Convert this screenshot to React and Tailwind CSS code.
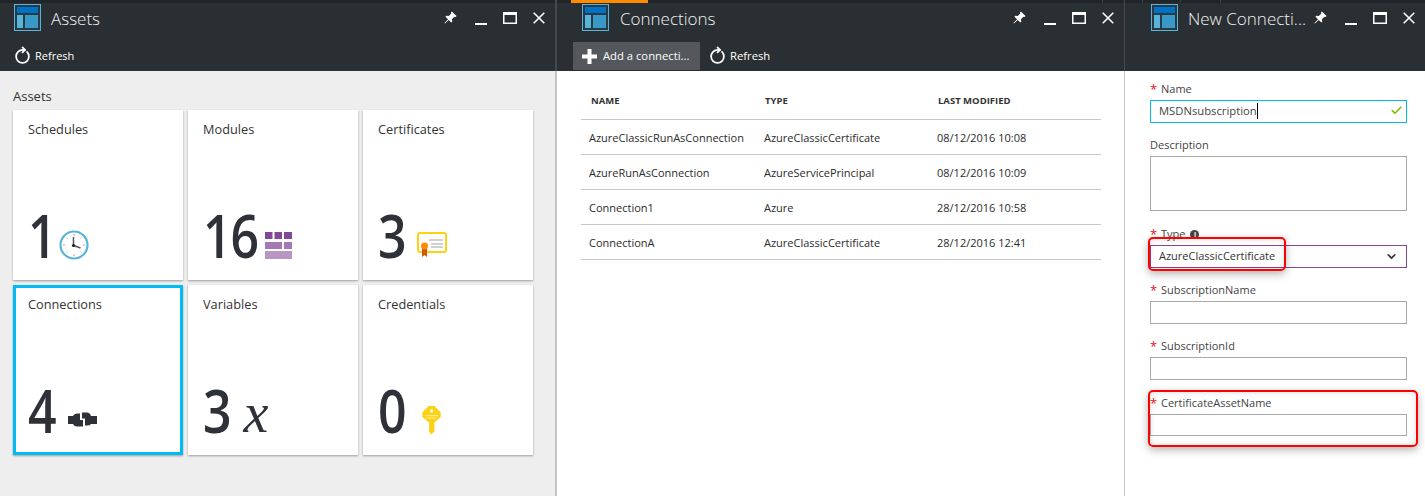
import React from 'react';
import { RotateCw, Check, ChevronDown } from 'lucide-react';

const font = "font-['Open_Sans','Noto_Sans',sans-serif]";

const BladeIcon = () => (
  <svg width="27" height="27" viewBox="0 0 27 27" className="shrink-0">
    <rect x="0.5" y="0.5" width="26" height="26" fill="#2a3a45" stroke="#59b4d9" />
    <rect x="3" y="3" width="21" height="6" fill="#0072c6" />
    <rect x="3" y="11" width="6" height="13" fill="#59b4d9" />
    <rect x="11" y="11" width="13" height="13" fill="#3999c6" />
  </svg>
);

const WindowControls = () => (
  <div className="flex items-center gap-[17px] text-white">
    <svg width="13" height="13" viewBox="0 0 14 14" fill="white" className="mr-px">
      <path d="M8.500 0.500l5 5-1 1-1.200-.4-2.800 2.800.4 2.600-1 1-2.900-2.900L1 13.500l-.5-.5 3.900-4L1.500 6.100l1-1 2.600.4 2.800-2.800-.4-1.200z" />
    </svg>
    <svg width="12" height="12" viewBox="0 0 12 12" className="mt-[2px]">
      <rect x="0" y="10" width="12" height="2" fill="white" />
    </svg>
    <svg width="14" height="12" viewBox="0 0 14 12" fill="none" className="-ml-px">
      <rect x="0.750" y="1" width="12.500" height="10.250" stroke="white" strokeWidth="1.500" />
      <rect x="0" y="0" width="14" height="3" fill="white" />
    </svg>
    <svg width="12" height="12" viewBox="0 0 12 12" className="-ml-px">
      <path d="M0.700 0.700L11.300 11.300M11.300 0.700L0.700 11.300" stroke="white" strokeWidth="1.600" />
    </svg>
  </div>
);

const BladeHeader = ({ title, titleClass = 'ml-[10px]' }) => (
  <div className="flex items-center h-[27px]">
    <BladeIcon />
    <div className={`${titleClass} mt-[2px] text-[17px] font-light text-[#f2f2f2] whitespace-nowrap`}>{title}</div>
    <div className="flex-1" />
    <WindowControls />
  </div>
);

const Clock = () => (
  <svg width="30" height="30" viewBox="0 0 30 30">
    <circle cx="15" cy="15" r="13.500" fill="white" stroke="#59b4d9" strokeWidth="2.200" />
    <path d="M15 4v2M15 24v2M4 15h2M24 15h2M7.500 7.500l1 1M21.500 21.500l1 1M7.500 22.500l1-1M21.500 8.500l1-1" stroke="#a0a1a2" strokeWidth="0.900" />
    <path d="M14.500 7v8.500l7 2.500" fill="none" stroke="#555" strokeWidth="1.500" />
    <circle cx="14.500" cy="15.500" r="1.600" fill="#222" />
  </svg>
);

const Modules = () => (
  <svg width="27" height="27" viewBox="0 0 27 27">
    <rect x="0" y="0" width="7.500" height="7" fill="#804998" />
    <rect x="9.500" y="0" width="7.500" height="7" fill="#804998" />
    <rect x="19" y="0" width="8" height="7" fill="#804998" />
    <rect x="0" y="10" width="17" height="7" fill="#a379b5" />
    <rect x="19" y="10" width="8" height="7" fill="#a379b5" />
    <rect x="0" y="19" width="27" height="8" fill="#b796c4" />
  </svg>
);

const Cert = () => (
  <svg width="30" height="26" viewBox="0 0 30 26">
    <rect x="1" y="1" width="28" height="19" rx="2" fill="white" stroke="#fcd116" strokeWidth="2" />
    <path d="M12 8h14M14 12h12M14 15h12" stroke="#a0a1a2" strokeWidth="1" />
    <path d="M5 15v10l2.500-2 2.500 2V15z" fill="#d15900" />
    <circle cx="7.500" cy="14" r="3.500" fill="#ff8c00" />
  </svg>
);

const Plug = () => (
  <svg width="29" height="16" viewBox="0 0 29 16" fill="#2e3238">
    <path d="M0 4H5Q6 1.500 9 1.500H12V8H15V14.500H9Q6 14.500 5 12H0Z" />
    <path d="M14 0.500H19Q22 0.500 23 4H29V12H23Q22 13.500 19 13.500H17V6.500H14Z" />
  </svg>
);

const Key = () => (
  <svg width="19" height="29" viewBox="0 0 19 30">
    <path d="M6.500 0h6L19 6.500v5L12.500 17v9l-3 3.500-2.500-2.500V17L0 11.500v-5z" fill="#fcd116" />
    <circle cx="9.500" cy="5" r="1.700" fill="white" />
    <path d="M3 10h13M4 12.500h11" stroke="#fff1a8" strokeWidth="1" />
  </svg>
);

const Tile = ({ label, value, icon, selected, iconClass }) => (
  <div className={`h-[170px] bg-white shadow-[0_1px_2px_rgba(0,0,0,0.35)] flex flex-col justify-between ${selected ? 'border-[3px] border-[#00bcf2] pl-3 pt-[7px] pb-[12px]' : 'pl-[15px] pt-[10px] pb-[15px]'}`}>
    <div className="text-[12.75px] text-[#333]">{label}</div>
    <div className="flex items-end">
      <span className="inline-block text-[50px] leading-none font-semibold tracking-[-1px] text-[#2e3238] origin-bottom scale-y-[1.2]">{value}</span>
      <span className={iconClass}>{icon}</span>
    </div>
  </div>
);

const rows = [
  ['AzureClassicRunAsConnection', 'AzureClassicCertificate', '08/12/2016 10:08'],
  ['AzureRunAsConnection', 'AzureServicePrincipal', '08/12/2016 10:09'],
  ['Connection1', 'Azure', '28/12/2016 10:58'],
  ['ConnectionA', 'AzureClassicCertificate', '28/12/2016 12:41'],
];

const Field = ({ label, required = true, children, info, className }) => (
  <div className={className}>
    <div className="relative h-[16px] flex items-center text-[11px] leading-[16px] text-[#444]">
      {required && <span className="absolute left-0 top-0 text-[#e81123] text-[13px]">*</span>}
      <span className={required ? 'ml-[11px]' : ''}>{label}</span>
      {info && <span className="ml-[5px] w-[9px] h-[9px] rounded-full bg-[#444] text-white text-[7px] leading-[9px] font-bold text-center">i</span>}
    </div>
    {children}
  </div>
);

const Box = ({ h = 'h-[23px]' }) => <div className={`mt-[3px] ${h} w-full bg-white border border-[#a9a9a9]`} />;

const Separator = () => (
  <div className="w-[2px] h-full bg-[#c4c4c4] flex flex-col">
    <div className="h-[71px] bg-[#44494d]" />
  </div>
);

const Refresh = () => <RotateCw size={17} strokeWidth={2.500} className="-rotate-45" />;

export default function App() {
  return (
    <div className={`${font} w-[1425px] h-[496px] overflow-hidden flex bg-white relative`}>
      {/* Assets blade */}
      <div className="w-[555px] h-full bg-[#eeeeee] flex flex-col">
        <div className="h-[71px] bg-[#2a2f33] border-t-[3px] border-[#212429] pl-[14px] pr-[10px] pt-px">
          <BladeHeader title="Assets" />
          <div className="flex items-center h-[28px] text-white text-[11px] gap-[4px] mt-[11px]">
            <Refresh />
            Refresh
          </div>
        </div>
        <div className="px-[13px] pt-[17px]">
          <div className="text-[13px] leading-[16px] text-[#333]">Assets</div>
          <div className="grid grid-cols-[170px_170px_170px] gap-[5px] mt-[6px]">
            <Tile label="Schedules" value="1" icon={<Clock />} iconClass="ml-[3px] mb-[5px]" />
            <Tile label="Modules" value="16" icon={<Modules />} iconClass="ml-[7px] mb-[6px]" />
            <Tile label="Certificates" value="3" icon={<Cert />} iconClass="ml-[11px] mb-[7px]" />
            <Tile label="Connections" value="4" icon={<Plug />} iconClass="ml-[12px] mb-[12px]" selected />
            <Tile label="Variables" value="3" icon={<span className="block font-['Liberation_Serif',serif] italic text-[56px] leading-none text-[#2e3238]">x</span>} iconClass="ml-[13px] -mb-px" />
            <Tile label="Credentials" value="0" icon={<Key />} iconClass="ml-[16px] mb-[5px]" />
          </div>
        </div>
      </div>
      <Separator />

      {/* Connections blade */}
      <div className="w-[567px] h-full bg-white flex flex-col">
        <div className="h-[71px] bg-[#2a2f33] border-t-[3px] border-[#212429] pl-[25px] pr-[10px] pt-px relative">
          <div className="absolute left-[14px] -top-[3px] w-[77px] h-[3px] bg-[#ff8c00]" />
          <BladeHeader title="Connections" titleClass="ml-[11px]" />
          <div className="flex items-stretch h-[28px] -ml-[9px] mt-[11px] text-white text-[11.25px]">
            <div className="w-[127px] bg-[#54585d] flex items-center pl-[9px] gap-[6px] whitespace-nowrap">
              <svg width="15" height="15" viewBox="0 0 15 15" fill="white">
                <path d="M5.500 0h4v5.500H15v4H9.500V15h-4V9.500H0v-4h5.500z" />
              </svg>
              Add a connecti...
            </div>
            <div className="flex items-center pl-[9px] gap-[4px]">
              <Refresh />
              Refresh
            </div>
          </div>
        </div>
        <div className="ml-[24px] w-[520px] mt-[20px]">
          <div className="grid grid-cols-[174px_173px_1fr] h-[29px] border-b border-[#c8c8c8] pl-[10px] text-[9.500px] font-bold text-[#333] leading-[20px]">
            <span>NAME</span>
            <span>TYPE</span>
            <span>LAST MODIFIED</span>
          </div>
          {rows.map((r) => (
            <div key={r[0]} className="grid grid-cols-[175px_173px_1fr] h-[35px] pt-[3px] items-center border-b border-[#c8c8c8] pl-[8px] text-[11px] text-[#2b2b2b] whitespace-nowrap">
              <span>{r[0]}</span>
              <span>{r[1]}</span>
              <span>{r[2]}</span>
            </div>
          ))}
        </div>
      </div>
      <div className="w-px h-full bg-[#c4c4c4] flex flex-col">
        <div className="h-[71px] bg-[#44494d]" />
      </div>

      {/* New Connection blade */}
      <div className="flex-1 h-full bg-white flex flex-col">
        <div className="h-[71px] bg-[#2a2f33] border-t-[3px] border-[#212429] pl-[26px] pr-[10px] pt-px">
          <BladeHeader title="New Connecti..." />
        </div>
        <div className="pl-[25px] pr-[18px] pt-[10px]">
          <Field label="Name">
            <div className="mt-[3px] h-[23px] border border-[#00bcf2] flex items-center pl-[8px] pr-[3px] pb-[2px] text-[11.25px] text-[#444]">
              <span className="border-r border-black leading-[16px]">MSDNsubscription</span>
              <div className="flex-1" />
              <Check size={13} strokeWidth={3} className="text-[#7fba00]" />
            </div>
          </Field>
          <Field label="Description" required={false} className="mt-[14px]">
            <Box h="h-[55px]" />
          </Field>
          <Field label="Type" info className="mt-[15px]">
            <div className="mt-[3px] h-[23px] border border-[#804998] flex items-center pl-[8px] pr-[8px] text-[11px] text-[#333]">
              <span className="flex-1">AzureClassicCertificate</span>
              <ChevronDown size={13} strokeWidth={3} />
            </div>
          </Field>
          <Field label="SubscriptionName" className="mt-[14px]"><Box /></Field>
          <Field label="SubscriptionId" className="mt-[14px]"><Box /></Field>
          <Field label="CertificateAssetName" className="mt-[15px]"><Box h="h-[22px]" /></Field>
        </div>
      </div>

      {/* ticks in the top strip */}
      <div className="absolute left-[1102px] top-0 w-px h-[3px] bg-[#3c4146]" />
      <div className="absolute left-[1142px] top-0 w-px h-[3px] bg-[#3c4146]" />
      <div className="absolute left-[1180px] top-0 w-px h-[3px] bg-[#3c4146]" />
      <div className="absolute left-[1220px] top-0 w-px h-[3px] bg-[#3c4146]" />

      {/* red annotation boxes drawn over the screenshot */}
      <div className="absolute left-[1148px] top-[237px] w-[138px] h-[34px] border-2 border-[#f00] rounded-[5px] shadow-[0_3px_8px_rgba(0,0,0,0.3),inset_0_0_6px_rgba(0,0,0,0.15)]" />
      <div className="absolute left-[1148px] top-[390px] w-[270px] h-[57px] border-2 border-[#f00] rounded-[5px] shadow-[0_3px_8px_rgba(0,0,0,0.3),inset_0_0_6px_rgba(0,0,0,0.15)]" />
    </div>
  );
}
